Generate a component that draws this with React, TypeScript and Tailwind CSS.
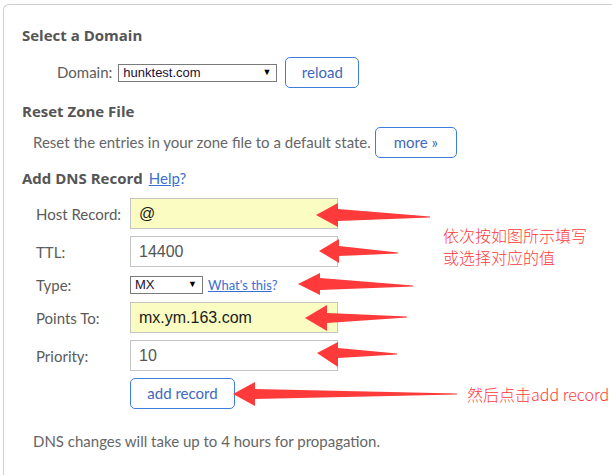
const arrows = [
  // tip x, tip y, back x, top, bottom, end x, end y, half-thickness
  [316, 215, 338, 203, 227, 430, 217, 6],
  [319, 251, 339, 239, 263, 398, 253, 5],
  [298, 284, 320, 273, 295, 413, 286, 6],
  [305, 318, 327, 305, 331, 407, 317, 5],
  [317, 353, 338, 342, 367, 397, 354, 5],
  [233, 394, 255, 382, 406, 457, 394, 5],
];

function Arrows() {
  return (
    <svg className="absolute left-0 top-0 pointer-events-none" width={612} height={475}>
      {arrows.map(([tx, ty, bx, y1, y2, ex, ey, h], i) => (
        <polygon
          key={i}
          fill="#ff3a3a"
          points={`${tx},${ty} ${bx},${y1} ${bx},${ty - h} ${ex},${ey - 0.6} ${ex},${ey + 0.6} ${bx},${ty + h} ${bx},${y2}`}
        />
      ))}
    </svg>
  );
}

function Row({ label, children }: { label: string; children: React.ReactNode }) {
  return (
    <div className="flex items-center pl-[14px]">
      <span className="w-[94px] text-[15px] leading-[18px] text-[#5b5b5b]">{label}</span>
      {children}
    </div>
  );
}

function TextBox({ value, yellow, dark }: { value: string; yellow?: boolean; dark?: boolean }) {
  return (
    <div
      className={`w-[208px] h-[31px] border border-[#c4c4c4] flex items-center pl-[8px] text-[16px] font-['Liberation_Sans',Arial,sans-serif] ${
        yellow ? "bg-[#fafcc2]" : "bg-white"
      } ${dark ? "text-[#1a1a1a]" : "text-[#555]"}`}
    >
      {value}
    </div>
  );
}

function Btn({ children, className }: { children: React.ReactNode; className: string }) {
  return (
    <div
      className={`h-[31px] border border-[#3d7ddb] rounded-[5px] flex items-center justify-center text-[15px] text-[#4068c0] ${className}`}
    >
      {children}
    </div>
  );
}

const head = "h-[20px] leading-[20px] text-[15px] font-bold text-[#555] font-['Open_Sans',sans-serif]";

export default function App() {
  return (
    <div className="relative w-[612px] h-[475px] overflow-hidden bg-white font-['Lato','Open_Sans',sans-serif]">
      <div className="ml-[3px] mt-[4px] h-[480px] border-l border-t border-[#cfcfcf] rounded-tl-[6px] pl-[18px]">
        <h4 className={`mt-[20px] ${head}`}>Select a Domain</h4>

        <div className="mt-[12px] flex items-center pl-[35px]">
          <span className="text-[15px] text-[#5b5b5b] mr-[6px]">Domain:</span>
          <div className="w-[159px] h-[18px] border border-[#7a7a7a] flex items-center justify-between pl-[4px] pr-[5px] font-['Liberation_Sans',Arial,sans-serif] text-[13px] text-[#1b0f33]">
            <span>hunktest.com</span>
            <span className="text-[9px] text-black">▼</span>
          </div>
          <Btn className="ml-[8px] w-[74px]">reload</Btn>
        </div>

        <h4 className={`mt-[13px] ${head}`}>Reset Zone File</h4>

        <div className="mt-[6px] flex items-center pl-[11px]">
          <span className="text-[15px] text-[#666]">Reset the entries in your zone file to a default state.</span>
          <Btn className="ml-[4px] w-[82px]">more »</Btn>
        </div>

        <h4 className={`mt-[10px] ${head}`}>
          Add DNS Record
          <span className="ml-[6px] font-normal text-[15px] text-[#3b6fd0] font-['Lato',sans-serif]">
            <span className="underline">Help</span>?
          </span>
        </h4>

        <div className="mt-[10px] flex flex-col gap-[7px]">
          <Row label="Host Record:">
            <TextBox value="@" yellow dark />
          </Row>
          <Row label="TTL:">
            <TextBox value="14400" />
          </Row>
        </div>

        <div className="mt-[9px]">
          <Row label="Type:">
            <div className="w-[73px] h-[18px] border border-[#7a7a7a] flex items-center justify-between pl-[4px] pr-[5px] font-['Liberation_Sans',Arial,sans-serif] text-[13px] text-[#1b0f33]">
              <span>MX</span>
              <span className="text-[9px] text-black">▼</span>
            </div>
            <span className="ml-[5px] text-[13px] leading-[18px] text-[#3b6fd0]">
              <span className="underline">What's this</span>?
            </span>
          </Row>
        </div>

        <div className="mt-[8px] flex flex-col gap-[7px]">
          <Row label="Points To:">
            <TextBox value="mx.ym.163.com" yellow dark />
          </Row>
          <Row label="Priority:">
            <TextBox value="10" />
          </Row>
          <div className="pl-[108px]">
            <Btn className="w-[105px]">add record</Btn>
          </div>
        </div>

        <p className="mt-[22px] pl-[11px] h-[20px] leading-[20px] text-[15px] text-[#666]">
          DNS changes will take up to 4 hours for propagation.
        </p>
      </div>

      <Arrows />

      <div className="absolute left-[443px] top-[224px] w-[150px] text-[16px] leading-[22px] text-[#ff3a3a] font-['Noto_Sans_CJK_SC',sans-serif] font-light">
        依次按如图所示填写
        <br />
        或选择对应的值
      </div>
      <div className="absolute left-[467px] top-[384px] text-[16px] leading-[20px] text-[#ff3a3a] font-['Noto_Sans_CJK_SC',sans-serif] font-light">
        然后点击add record
      </div>
    </div>
  );
}
